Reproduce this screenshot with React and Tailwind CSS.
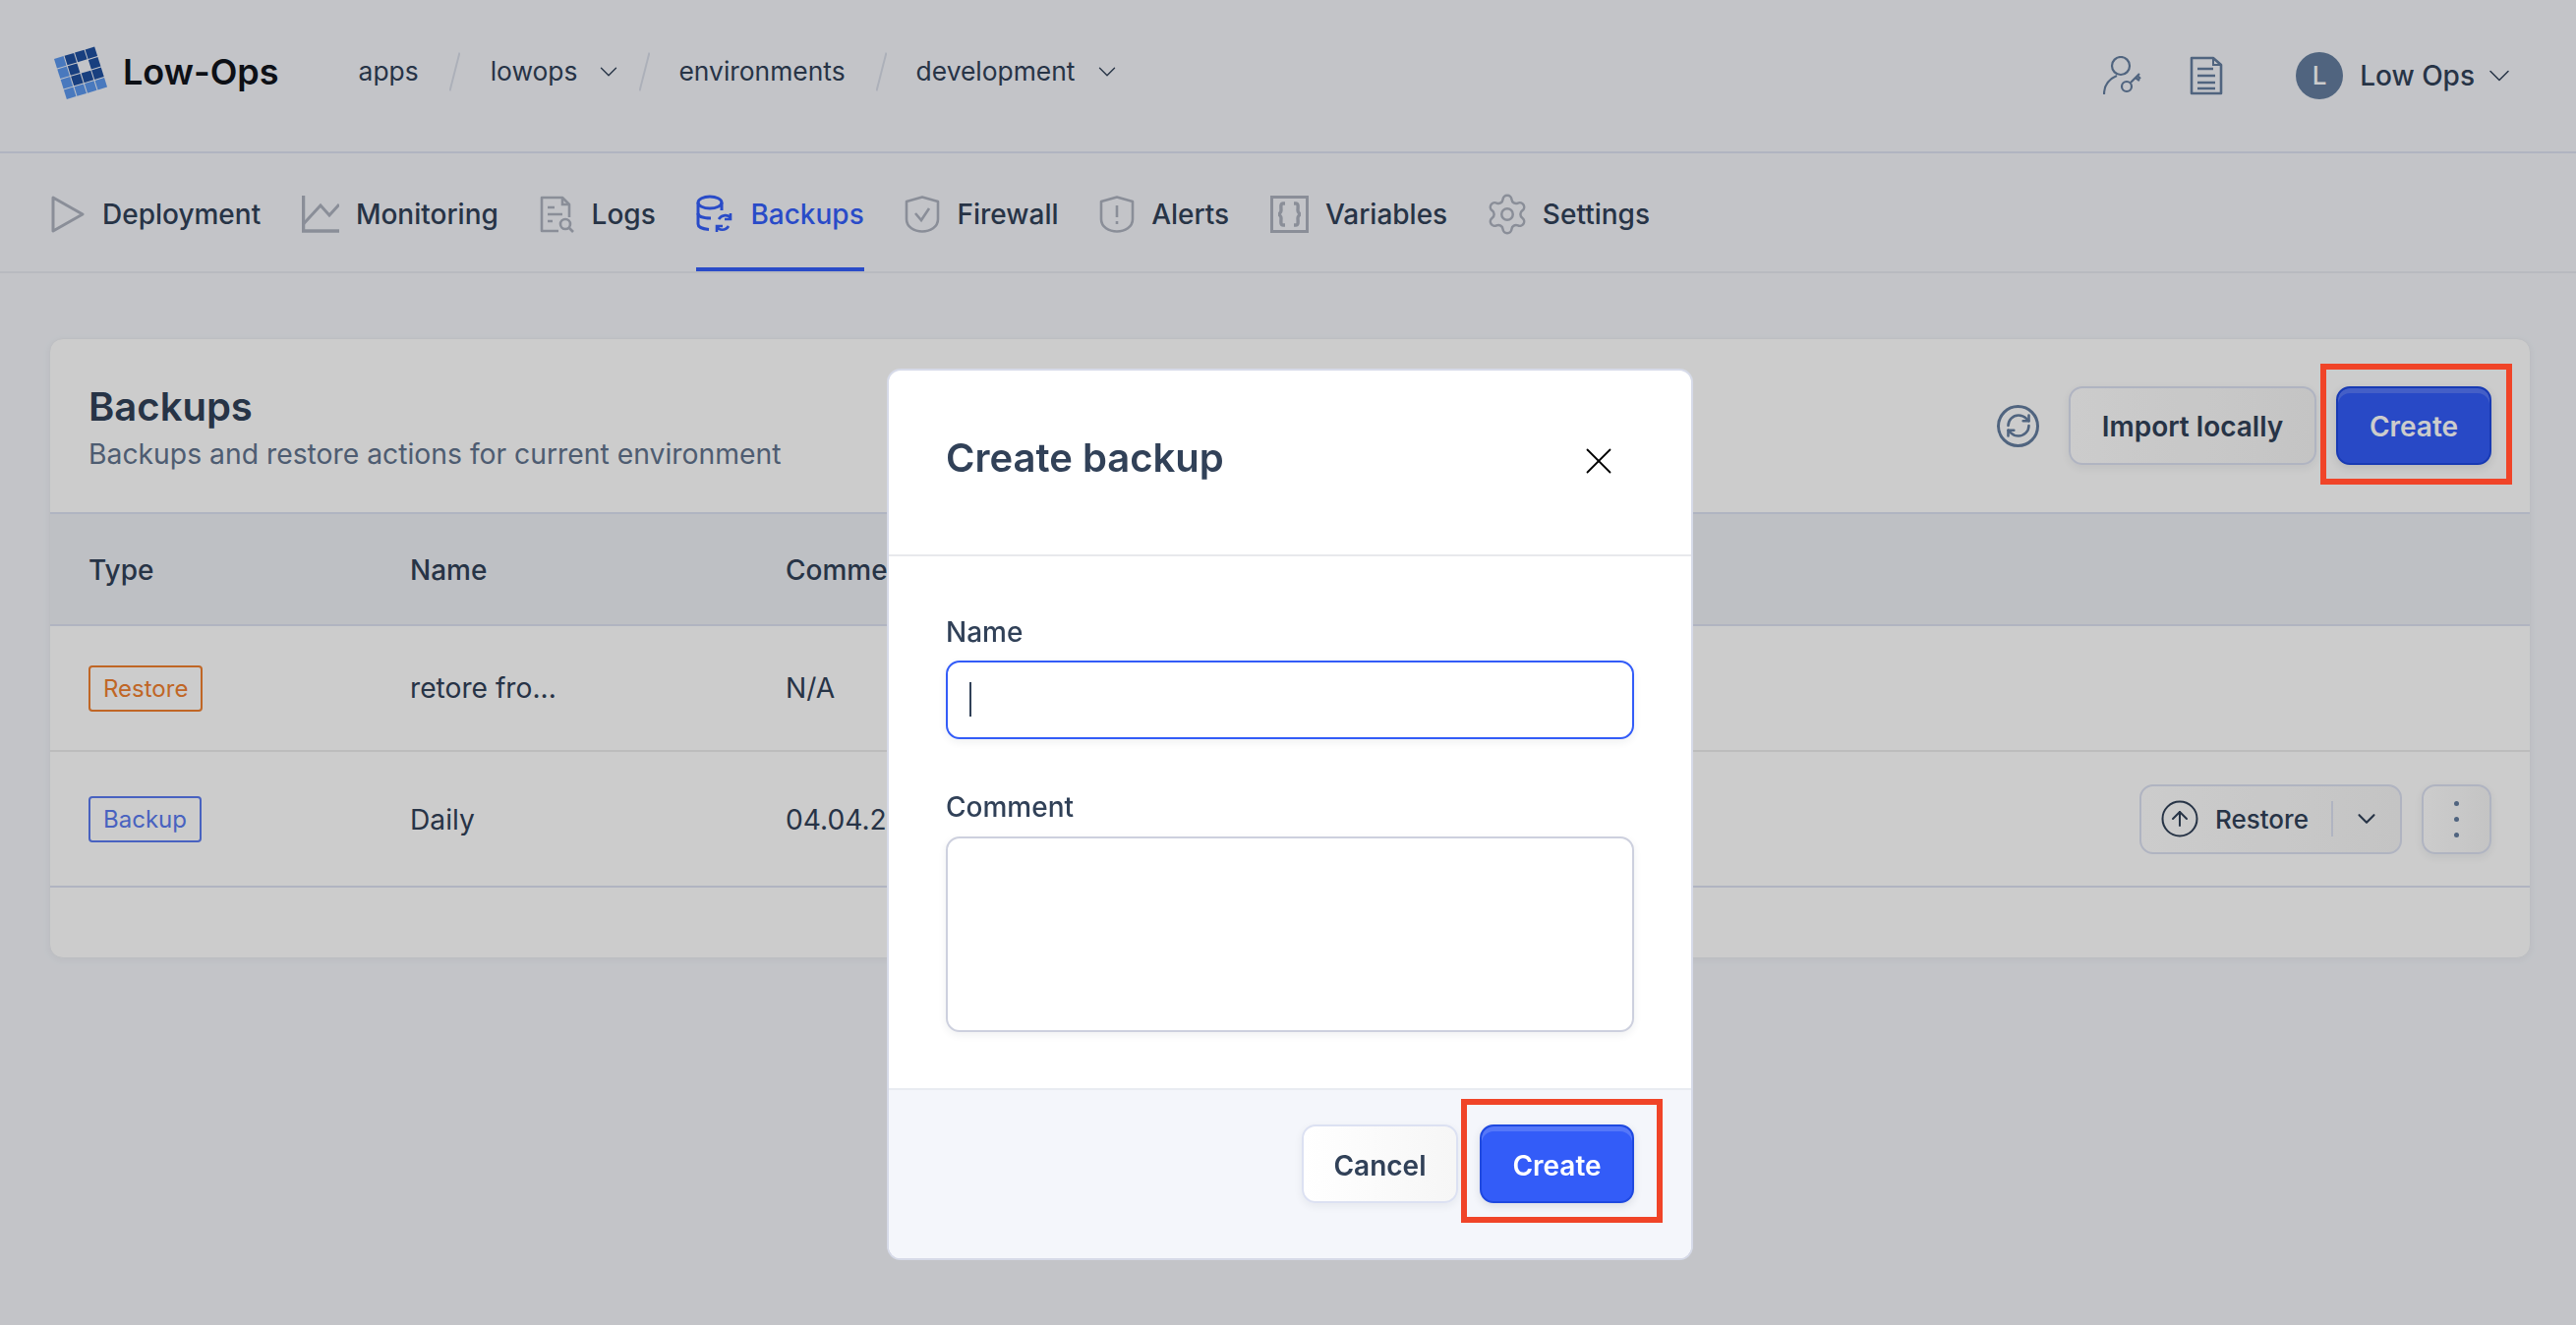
import React from 'react';
import { ChevronDown, CircleArrowUp, RefreshCw, Settings, X } from 'lucide-react';

const Logo = () => {
  // 4x4 tilted grid, cells given as [row, col, colour]
  const light = '#5c98ee';
  const dark = '#1f4f9f';
  const cells = [
    [0, 0, light], [0, 1, dark], [0, 2, dark], [0, 3, dark],
    [1, 0, light], [1, 1, dark], [1, 3, dark],
    [2, 0, light], [2, 1, dark], [2, 2, dark], [2, 3, dark],
    [3, 0, light], [3, 1, light], [3, 2, light], [3, 3, light],
  ];
  return (
    <svg width="58" height="60" viewBox="0 0 58 60" className="shrink-0">
      <g transform="matrix(0.957 -0.29 0.3 0.954 1 17)">
        {cells.map(([r, c, fill]) => (
          <rect key={`${r}-${c}`} x={c * 11} y={r * 11} width="10" height="10" fill={fill} />
        ))}
      </g>
    </svg>
  );
};

const Slash = () => (
  <svg width="11" height="40" viewBox="0 0 11 40" className="shrink-0">
    <path d="M10.5 0.5 L0.5 39.5" stroke="#d8dce8" strokeWidth="2" fill="none" />
  </svg>
);

const tabStroke = '#adb2bf';

const PlayIcon = () => (
  <svg width="36" height="38" viewBox="0 0 36 38" fill="none" stroke={tabStroke} strokeWidth="3" strokeLinejoin="round">
    <path d="M3 2 L33 19 L3 36 Z" />
  </svg>
);
const ChartIcon = () => (
  <svg width="38" height="38" viewBox="0 0 38 38" fill="none" stroke={tabStroke} strokeWidth="3">
    <path d="M1.5 0 V36 H38" strokeWidth="3.5" />
    <path d="M1.5 29 L19 10 L28 20 L38 9" />
  </svg>
);
const LogsIcon = () => (
  <svg width="36" height="38" viewBox="0 0 36 38" fill="none" stroke={tabStroke} strokeWidth="2.6">
    <path d="M19 36 H2 V2 H23 L30 9 V22" strokeLinejoin="round" />
    <path d="M23 2 V9 H30" />
    <path d="M8 12 H15 M8 19 H23 M8 26 H13" />
    <circle cx="26" cy="29" r="5" />
    <path d="M30 33 L34 37" />
  </svg>
);
const BackupIcon = () => (
  <svg width="38" height="40" viewBox="0 0 38 40" fill="none" stroke="#345efa" strokeWidth="3">
    <ellipse cx="14" cy="8" rx="12" ry="6" />
    <path d="M2 8 V30 C2 33 7 35 13 35.5" />
    <path d="M26 8 V16" />
    <path d="M2 19 C2 22 7 24 15 24" />
    <path d="M35 24 C33 20 26 20 23 25 M35 19 V25 H29" strokeWidth="2.6" />
    <path d="M21 32 C23 37 30 37 33 32 M21 38 V32 H27" strokeWidth="2.6" />
  </svg>
);
const ShieldIcon = ({ children }) => (
  <svg width="36" height="38" viewBox="0 0 36 38" fill="none" stroke={tabStroke} strokeWidth="2.6">
    <path d="M2 6 L18 1.5 L34 6 V24 C34 32 26 36.5 18 36.5 C10 36.5 2 32 2 24 Z" strokeLinejoin="round" />
    {children}
  </svg>
);
const BracesIcon = () => (
  <svg width="39" height="38" viewBox="0 0 39 38" fill="none" stroke={tabStroke}>
    <rect x="1.5" y="1.5" width="36" height="35" strokeWidth="3" />
    <path d="M15 8 H13 C10 8 11 12 11 15 C11 17 9 19 8 19 C9 19 11 21 11 23 C11 26 10 30 13 30 H15" strokeWidth="3.4" />
    <path d="M24 8 H26 C29 8 28 12 28 15 C28 17 30 19 31 19 C30 19 28 21 28 23 C28 26 29 30 26 30 H24" strokeWidth="3.4" />
  </svg>
);

const UserKeyIcon = () => (
  <svg width="40" height="40" viewBox="0 0 40 40" fill="none" stroke="#647e9f" strokeWidth="2.2">
    <ellipse cx="18" cy="10" rx="9" ry="9" />
    <path d="M1 39 C1 28 7 23 14 20" />
    <circle cx="24" cy="31" r="5" />
    <path d="M28 27 L37 18 M33 22 L37 25 M35 20 L38 23" />
  </svg>
);
const DocIcon = () => (
  <svg width="34" height="40" viewBox="0 0 34 40" fill="none" stroke="#647e9f" strokeWidth="2.6">
    <path d="M2 2 H24 L32 9 V38 H2 Z" strokeLinejoin="round" />
    <path d="M24 2 V9 H32" strokeWidth="2" />
    <path d="M8 13 H24 M8 20 H26 M8 27 H26 M8 33 H26" />
  </svg>
);

const tabs = [
  { label: 'Deployment', icon: <PlayIcon /> },
  { label: 'Monitoring', icon: <ChartIcon /> },
  { label: 'Logs', icon: <LogsIcon /> },
  { label: 'Backups', icon: <BackupIcon />, active: true },
  {
    label: 'Firewall',
    icon: <ShieldIcon><path d="M11 18 L17 25 L25 13" /></ShieldIcon>,
  },
  {
    label: 'Alerts',
    icon: <ShieldIcon><path d="M18 10 V22 M18 26 V29" /></ShieldIcon>,
  },
  { label: 'Variables', icon: <BracesIcon /> },
  { label: 'Settings', icon: <Settings size={46} strokeWidth={1.3} color={tabStroke} className="-mx-[4px]" /> },
];

const SecondaryButton = ({ className, children }) => (
  <button className={`h-20 rounded-[14px] border-2 border-[#dce1f2] bg-gradient-to-r from-white to-[#f6f6f6] text-[28px] font-semibold text-slate-700 shadow-[0_3px_8px_rgba(30,41,59,0.07)] ${className}`}>
    {children}
  </button>
);

const PrimaryButton = ({ className, children }) => (
  <button className={`h-20 rounded-[14px] border-2 border-[#1f49e0] bg-[#335cf8] text-[28px] font-semibold text-white shadow-[inset_0_5px_0_rgba(255,255,255,0.17),0_3px_8px_rgba(30,41,59,0.12)] ${className}`}>
    {children}
  </button>
);

const Badge = ({ className, children }) => (
  <span className={`inline-flex h-[47px] items-center rounded-[4px] border-2 bg-white px-[13px] text-[24px] ${className}`}>
    {children}
  </span>
);

const App = () => {
  return (
    <div className="relative h-screen overflow-hidden bg-[#f4f6fb] font-[Inter,sans-serif] text-slate-700">
      {/* top bar */}
      <header className="flex h-[156px] items-center justify-between border-b-2 border-[#dce1f2] pb-[1px] pl-[54px] pr-[60px]">
        <div className="flex items-center pb-[7px]">
          <Logo />
          <span className="ml-[13px] text-[36px] font-semibold text-[#11141c]">Low-Ops</span>
          <nav className="ml-[81px] flex items-center text-[26.4px]">
            <span>apps</span>
            <span className="mx-[31px]"><Slash /></span>
            <span>lowops</span>
            <ChevronDown size={30} strokeWidth={1.1} className="ml-[17px] mr-[16px]" />
            <Slash />
            <span className="ml-[29px] mr-[31px]">environments</span>
            <Slash />
            <span className="ml-[30px]">development</span>
            <ChevronDown size={30} strokeWidth={1.1} className="ml-[18px]" />
          </nav>
        </div>
        <div className="flex items-center">
          <UserKeyIcon />
          <span className="ml-[48px]"><DocIcon /></span>
          <span className="ml-[74px] flex h-12 w-12 items-center justify-center rounded-full bg-[#647e9f] text-[26px] font-medium text-white">L</span>
          <span className="ml-[17px] text-[28px] font-medium">Low Ops</span>
          <ChevronDown size={36} strokeWidth={1} className="ml-[7px]" />
        </div>
      </header>

      {/* tabs */}
      <nav className="flex h-[122px] items-stretch gap-[41.7px] border-b-2 border-[#e7e9f1] pl-[51px]">
        {tabs.map((tab) => (
          <div
            key={tab.label}
            className={`flex items-center gap-[17px] border-b-4 pb-[5px] pt-[13px] text-[28px] font-medium ${tab.active ? 'border-[#345efa] text-[#345efa]' : 'border-transparent'}`}
          >
            {tab.icon}
            <span>{tab.label}</span>
          </div>
        ))}
      </nav>

      {/* backups card */}
      <main className="pl-[50px] pr-[46px] pt-[66px]">
        <section className="h-[631px] overflow-hidden rounded-[14px] border border-[#eceef3] bg-white shadow-[0_2px_8px_rgba(30,41,59,0.05)]">
          <div className="flex h-[178px] items-center justify-between border-b-2 border-[#dce1f2] pl-[39px] pr-[39px]">
            <div>
              <h2 className="text-[40px] font-semibold leading-[57px]">Backups</h2>
              <p className="text-[28.3px] leading-[40px] text-slate-500">Backups and restore actions for current environment</p>
            </div>
            <div className="flex items-center">
              <span className="mr-[30px] flex h-[43px] w-[43px] items-center justify-center rounded-full border-[3px] border-[#647e9f]">
                <RefreshCw size={28} strokeWidth={2.2} color="#647e9f" />
              </span>
              <SecondaryButton className="w-[252px] pt-[2px]">Import locally</SecondaryButton>
              <PrimaryButton className="ml-[20px] w-[158px] pt-[2px]">Create</PrimaryButton>
            </div>
          </div>

          <div className="grid h-[114px] grid-cols-[327px_382px_1fr] items-center border-b-2 border-[#dce1f2] bg-[#eef0f5] pl-[39px] pt-[2px] text-[28px] font-medium">
            <span>Type</span>
            <span>Name</span>
            <span>Comment</span>
          </div>

          <div className="grid h-[128px] grid-cols-[327px_382px_1fr] items-center border-b-2 border-[#ebecec] pl-[39px] pt-[1px] text-[28.2px]">
            <span><Badge className="border-[#f0802f] text-[#f0802f]">Restore</Badge></span>
            <span>retore fro...</span>
            <span>N/A</span>
          </div>

          <div className="grid h-[138px] grid-cols-[327px_382px_1fr] items-center border-b-2 border-[#dce1f2] pl-[39px] pr-[39px] text-[28.2px]">
            <span className="pt-[1px]"><Badge className="border-[#5b7bf0] text-[#5b7bf0]">Backup</Badge></span>
            <span className="pt-[2px]">Daily</span>
            <div className="flex items-center justify-between">
              <span className="pt-[2px]">04.04.2025</span>
              <div className="flex items-center gap-[20px]">
                <div className="flex h-[71px] w-[267px] items-center rounded-[14px] border-2 border-[#dce1f2] bg-gradient-to-r from-white to-[#f6f6f6]">
                  <CircleArrowUp size={42} strokeWidth={1.15} className="ml-[18px]" />
                  <span className="ml-[15px] text-[26px] font-medium">Restore</span>
                  <span className="ml-[23px] h-9 w-[2px] bg-[#dce1f2]" />
                  <ChevronDown size={30} strokeWidth={1.7} className="ml-[19px]" />
                </div>
                <div className="flex h-[71px] w-[71px] flex-col items-center justify-center gap-[11px] rounded-[14px] border-2 border-[#dce1f2] bg-gradient-to-r from-white to-[#f6f6f6] shadow-[0_3px_8px_rgba(30,41,59,0.07)]">
                  <span className="h-[5px] w-[5px] rounded-full bg-[#647e9f]" />
                  <span className="h-[5px] w-[5px] rounded-full bg-[#647e9f]" />
                  <span className="h-[5px] w-[5px] rounded-full bg-[#647e9f]" />
                </div>
              </div>
            </div>
          </div>
        </section>
      </main>

      {/* dialog overlay */}
      <div className="fixed inset-0 flex items-start justify-center bg-black/20 pl-[4px] pt-[375px]">
        {/* marker around the card's create button */}
        <div className="absolute left-[2360px] top-[370px] h-[123px] w-[195px] border-[6px] border-[#f04428]" />

        <div className="flex h-[907px] w-[820px] flex-col overflow-hidden rounded-[14px] border-2 border-[#d6dae8] bg-white">
          <div className="flex h-[189px] shrink-0 items-center justify-between border-b-2 border-[#e8e9ec] pb-[10px] pl-[58px] pr-[71px]">
            <h3 className="text-[40px] font-semibold">Create backup</h3>
            <X size={46} strokeWidth={0.95} color="#000000" className="mt-[6px]" />
          </div>

          <div className="flex-1 px-[58px] pt-[60px]">
            <label className="block text-[28px] font-medium leading-[34px]">Name</label>
            <div className="relative mt-[12px]">
              <input className="block h-20 w-full rounded-[14px] border-2 border-[#335cf8] bg-white caret-transparent shadow-[0_3px_8px_rgba(30,41,59,0.07)] outline-none" />
              <span className="absolute left-[24px] top-[22px] h-[35px] w-[2px] bg-slate-700" />
            </div>
            <label className="mt-[52px] block text-[28px] font-medium leading-[34px]">Comment</label>
            <textarea className="mt-[13px] block h-[199px] w-full resize-none rounded-[14px] border-2 border-[#cdd0de] bg-white shadow-[0_3px_8px_rgba(30,41,59,0.07)] outline-none" />
          </div>

          <div className="flex h-[173px] shrink-0 items-start justify-end gap-[22px] border-t-2 border-[#e8ebf1] bg-[#f4f6fb] pr-[58px] pt-[35px]">
            <SecondaryButton className="w-[159px] pt-[4px]">Cancel</SecondaryButton>
            <div className="relative">
              <PrimaryButton className="w-[157px] pt-[4px]">Create</PrimaryButton>
              <div className="absolute -left-[19px] -right-[29px] -top-[26px] -bottom-[20px] border-[6px] border-[#f04428]" />
            </div>
          </div>
        </div>
      </div>
    </div>
  );
};

export default App;
